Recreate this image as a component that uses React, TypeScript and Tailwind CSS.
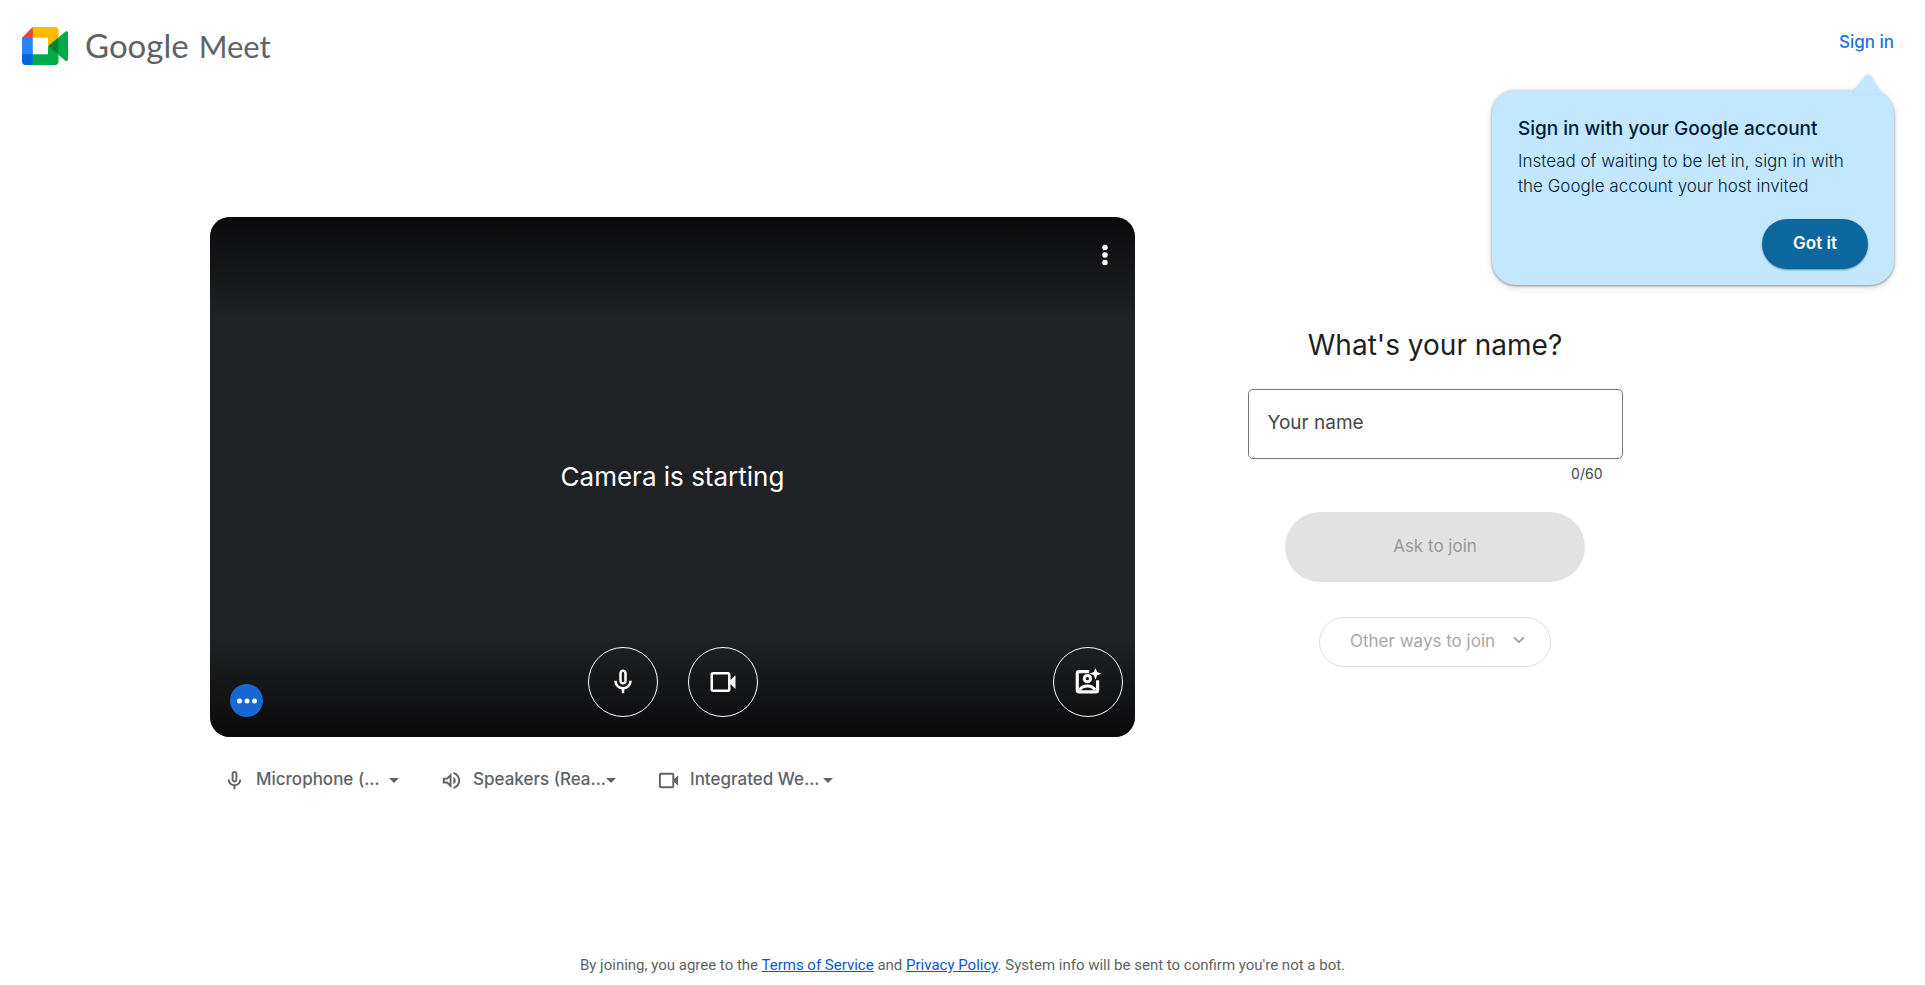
import { useState } from "react";
import type { ReactNode } from "react";

function Glyph({ d, className }: { d: string; className: string }) {
  return (
    <svg viewBox="0 0 24 24" fill="currentColor" fillRule="evenodd" aria-hidden="true" className={className}>
      <path d={d} />
    </svg>
  );
}

const MIC =
  "M12 14c1.66 0 3-1.34 3-3V5c0-1.66-1.34-3-3-3S9 3.34 9 5v6c0 1.66 1.34 3 3 3zm-1-9c0-.55.45-1 1-1s1 .45 1 1v6c0 .55-.45 1-1 1s-1-.45-1-1V5zm6 6c0 2.76-2.24 5-5 5s-5-2.24-5-5H5c0 3.53 2.61 6.43 6 6.92V21h2v-3.08c3.39-.49 6-3.39 6-6.92h-2z";
const CAMERA =
  "M18 10.48V6c0-1.1-.9-2-2-2H4c-1.1 0-2 .9-2 2v12c0 1.1.9 2 2 2h12c1.1 0 2-.9 2-2v-4.48l4 3.98v-11l-4 3.98zM16 18H4V6h12v12z";
const SPEAKER =
  "M3 9v6h4l5 5V4L7 9H3zm7-.17v6.34L7.83 13H5v-2h2.83L10 8.83zM16.5 12A4.5 4.5 0 0 0 14 7.97v8.05c1.48-.73 2.5-2.25 2.5-4.02zM14 3.23v2.06c2.89.86 5 3.54 5 6.71s-2.11 5.85-5 6.71v2.06c4.01-.91 7-4.49 7-8.77s-2.99-7.86-7-8.77z";
const MORE_VERT =
  "M12 8.2a2.2 2.2 0 1 0 0-4.4 2.2 2.2 0 0 0 0 4.4zm0 1.6a2.2 2.2 0 1 0 0 4.4 2.2 2.2 0 0 0 0-4.4zm0 6a2.2 2.2 0 1 0 0 4.4 2.2 2.2 0 0 0 0-4.4z";
const MORE_HORIZ =
  "M6 10a2 2 0 1 0 0 4 2 2 0 0 0 0-4zm6 0a2 2 0 1 0 0 4 2 2 0 0 0 0-4zm6 0a2 2 0 1 0 0 4 2 2 0 0 0 0-4z";

function EffectsIcon() {
  return (
    <svg viewBox="0 0 24 24" fill="none" aria-hidden="true" className="size-[30px]">
      <path
        d="M13 3.7H5c-.9 0-1.6.7-1.6 1.6v13c0 .9.7 1.600 1.600 1.600h13.100c.9 0 1.600-.7 1.600-1.600V10.600"
        stroke="currentColor"
        strokeWidth="2.5"
      />
      <circle cx="11.500" cy="9.300" r="2.500" stroke="currentColor" strokeWidth="2.400" />
      <path d="M5.200 18.200c1.600-2.100 3.800-3.100 6.300-3.100s4.700 1 6.300 3.100" stroke="currentColor" strokeWidth="2.400" />
      <path
        d="M18 .7l1.300 3.300 3.500 1.300-3.500 1.300L18 9.900l-1.300-3.300-3.500-1.300 3.500-1.300z"
        fill="currentColor"
      />
    </svg>
  );
}

function Logo() {
  return (
    <a href="#home" className="flex items-center gap-[17px] text-[#5f6368]">
      <svg viewBox="0 0 87.5 72" aria-hidden="true" className="h-[38px] w-[46px]">
        <path fill="#00832d" d="M49.5 36l8.53 9.75 11.47 7.33 2-17.02-2-16.64-11.69 6.44z" />
        <path fill="#0066da" d="M0 51.5V66c0 3.315 2.685 6 6 6h14.5l3-10.96-3-9.54-9.95-3z" />
        <path fill="#e94235" d="M20.5 0L0 20.5l10.55 3 9.95-3 2.95-9.41z" />
        <path fill="#2684fc" d="M20.5 20.5H0v31h20.5z" />
        <path
          fill="#00ac47"
          d="M82.6 8.68L69.5 19.42v33.66l13.16 10.79c1.97 1.54 4.85.135 4.85-2.37V11c0-2.535-2.945-3.925-4.91-2.32zM49.5 36v15.5h-29V72h43c3.315 0 6-2.685 6-6V53.08z"
        />
        <path fill="#ffba00" d="M63.5 0h-43v20.5h29V36l20-16.57V6c0-3.315-2.685-6-6-6z" />
      </svg>
      <span className="flex items-baseline gap-2.5 font-[Lato,sans-serif] leading-10">
        <span className="text-[33px]">Google</span>
        <span className="text-[31px]">Meet</span>
      </span>
    </a>
  );
}

function SignInCallout({ onClose }: { onClose: () => void }) {
  return (
    <aside className="absolute top-[65px] right-0 w-[402px] rounded-3xl bg-[#c2e7ff] px-[26px] pt-[26px] pb-4 text-[#001d35] shadow-[0_1px_3px_rgba(0,0,0,0.4),0_2px_8px_rgba(0,0,0,0.12)]">
      <svg
        viewBox="0 0 28 20"
        aria-hidden="true"
        className="absolute -top-4 right-3 h-5 w-7 drop-shadow-[0_-1px_1px_rgba(0,0,0,0.12)]"
      >
        <path d="M0 16.5L10.5 3Q14-1 17.5 3L28 19.5V20H0z" fill="#c2e7ff" />
      </svg>
      <h2 className="text-[19px] leading-[25px] font-medium">Sign in with your Google account</h2>
      <p className="mt-2 text-[17px] leading-[25px] font-light">
        Instead of waiting to be let in, sign in with the Google account your host invited
      </p>
      <div className="mt-5 flex justify-end">
        <button
          type="button"
          onClick={onClose}
          className="h-[50px] w-[106px] rounded-full bg-[#0b679e] text-[17px] font-semibold text-white shadow-[0_1px_2px_rgba(0,0,0,0.4)]"
        >
          Got it
        </button>
      </div>
    </aside>
  );
}

function RoundButton({ label, children }: { label: string; children: ReactNode }) {
  return (
    <button
      type="button"
      aria-label={label}
      className="flex size-[70px] items-center justify-center rounded-full border border-white text-white"
    >
      {children}
    </button>
  );
}

function DeviceButton({ icon, label }: { icon: string; label: string }) {
  return (
    <button type="button" className="flex h-[50px] w-[217px] items-center pl-[13px] text-[#5f6368]">
      <Glyph d={icon} className="mr-2.5 size-[23px]" />
      <span className="w-[133px] text-left text-[17px] font-medium">{label}</span>
      <svg viewBox="0 0 10 5" fill="currentColor" aria-hidden="true" className="h-[5px] w-2.5">
        <path d="M0 0h10L5 5z" />
      </svg>
    </button>
  );
}

function Preview() {
  return (
    <section className="min-w-0 flex-1">
      <div className="relative flex aspect-[925/520] items-center justify-center overflow-hidden rounded-[20px] bg-[#202124] text-white">
        <div className="absolute inset-x-0 top-0 h-[100px] bg-linear-to-b from-black/70 to-transparent" />
        <div className="absolute inset-x-0 bottom-0 h-[100px] bg-linear-to-t from-black/70 to-transparent" />
        <p className="text-[26px] leading-9">Camera is starting</p>
        <button
          type="button"
          aria-label="More options"
          className="absolute top-4 right-2 flex size-11 items-center justify-center"
        >
          <Glyph d={MORE_VERT} className="size-[30px]" />
        </button>
        <div className="absolute bottom-5 left-5 flex size-[33px] items-center justify-center rounded-full bg-[#1967d2]">
          <Glyph d={MORE_HORIZ} className="size-[30px]" />
        </div>
        <div className="absolute inset-x-0 bottom-5 flex justify-center gap-[30px]">
          <RoundButton label="Turn off microphone">
            <Glyph d={MIC} className="size-[30px]" />
          </RoundButton>
          <RoundButton label="Turn off camera">
            <Glyph d={CAMERA} className="size-[30px]" />
          </RoundButton>
        </div>
        <div className="absolute right-3 bottom-5">
          <RoundButton label="Apply visual effects">
            <EffectsIcon />
          </RoundButton>
        </div>
      </div>
      <div className="mt-[18px] flex flex-wrap">
        <DeviceButton icon={MIC} label="Microphone (..." />
        <DeviceButton icon={SPEAKER} label="Speakers (Rea..." />
        <DeviceButton icon={CAMERA} label="Integrated We..." />
      </div>
    </section>
  );
}

function JoinForm() {
  const [name, setName] = useState("");
  return (
    <form
      onSubmit={(e) => e.preventDefault()}
      className="flex w-[560px] shrink-0 flex-col items-center pt-[108px]"
    >
      <h1 className="text-[28px] leading-10 text-[#1f1f1f]">What's your name?</h1>
      <div className="relative mt-6 w-[375px]">
        <input
          id="name"
          type="text"
          maxLength={60}
          value={name}
          onChange={(e) => setName(e.target.value)}
          placeholder=" "
          className="peer block h-[70px] w-full rounded-[5px] border border-[#747775] px-[19px] text-[19px] text-[#1f1f1f]"
        />
        <label
          htmlFor="name"
          className="pointer-events-none absolute top-0 left-5 hidden h-[68px] items-center text-[19px] text-[#444746] peer-placeholder-shown:flex"
        >
          Your name
        </label>
        <p className="mt-[5px] pr-5 text-right text-sm text-[#444746]">{name.length}/60</p>
      </div>
      <button
        type="submit"
        disabled={name.length === 0}
        className="mt-7 h-[70px] w-[300px] rounded-full bg-[#1a73e8] text-[17px] text-white disabled:bg-[#e2e2e2] disabled:text-[#999999]"
      >
        Ask to join
      </button>
      <button
        type="button"
        disabled
        className="mt-[35px] flex h-[50px] w-[232px] items-center justify-between rounded-full border border-[#dedede] pr-[25px] pl-[30px] text-[17px] text-[#a8a8a8]"
      >
        Other ways to join
        <svg
          viewBox="0 0 12 8"
          fill="none"
          stroke="currentColor"
          strokeWidth="2"
          aria-hidden="true"
          className="mb-1 h-2 w-3"
        >
          <path d="M1 1.2L6 6.2l5-5" />
        </svg>
      </button>
    </form>
  );
}

export default function App() {
  const [calloutOpen, setCalloutOpen] = useState(true);
  return (
    <div className="flex min-h-screen flex-col bg-white font-[Inter,sans-serif]">
      <header className="flex h-[65px] items-start justify-between pt-[25px] pr-[31px] pl-[22px]">
        <Logo />
        <div className="relative z-10 pt-[3px]">
          <a href="#signin" className="block text-[17px] leading-7 font-medium text-[#1a73e8]">
            Sign in
          </a>
          {calloutOpen && <SignInCallout onClose={() => setCalloutOpen(false)} />}
        </div>
      </header>
      <main className="mt-[152px] flex flex-1 gap-5 px-[210px]">
        <Preview />
        <JoinForm />
      </main>
      <footer className="pt-2 pb-[9px] text-center font-[Roboto,sans-serif] text-[15px] leading-[22px] text-[#5f6368]">
        By joining, you agree to the{" "}
        <a href="#terms" className="text-[#0b57d0] underline">
          Terms of Service
        </a>{" "}
        and{" "}
        <a href="#privacy" className="text-[#0b57d0] underline">
          Privacy Policy
        </a>
        . System info will be sent to confirm you're not a bot.
      </footer>
    </div>
  );
}
